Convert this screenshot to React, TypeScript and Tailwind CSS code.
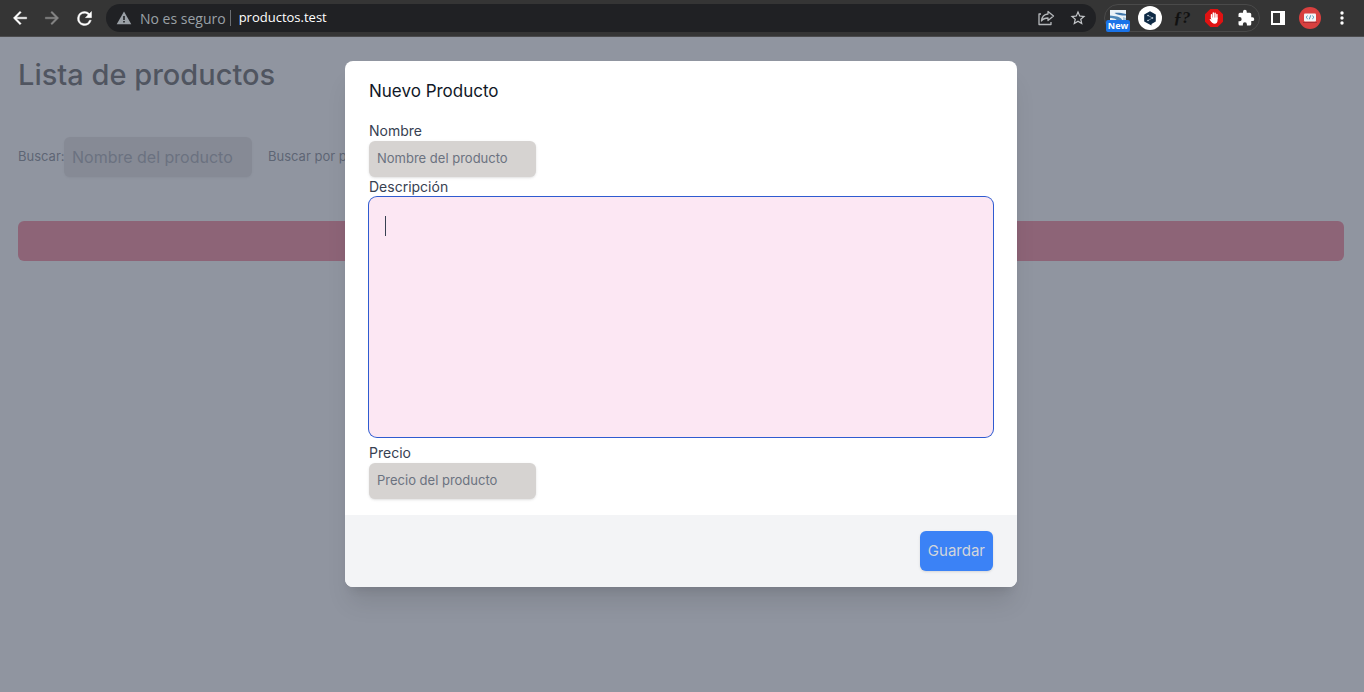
import type { ReactNode } from "react";

function BarButton({ label, children }: { label: string; children: ReactNode }) {
  return (
    <button type="button" aria-label={label} className="flex h-8 w-8 shrink-0 items-center justify-center">
      {children}
    </button>
  );
}

function BrowserBar() {
  return (
    <header className="flex h-[37px] items-center border-b border-[#4b4b4d] bg-[#353535] pr-[6px] pl-1 font-['Open_Sans',sans-serif]">
      <BarButton label="Atrás">
        <svg width="20" height="20" viewBox="0 0 24 24" fill="#fff">
          <path d="M20 11H7.830l5.590-5.590L12 4l-8 8 8 8 1.410-1.410L7.830 13H20v-2z" stroke="#fff" strokeWidth=".5" />
        </svg>
      </BarButton>
      <BarButton label="Adelante">
        <svg width="20" height="20" viewBox="0 0 24 24" fill="#868686">
          <path d="M12 4l-1.410 1.410L16.170 11H4v2h12.170l-5.580 5.590L12 20l8-8z" stroke="#868686" strokeWidth=".5" />
        </svg>
      </BarButton>
      <BarButton label="Recargar">
        <svg width="21" height="21" viewBox="0 0 24 24" fill="#fff">
          <path d="M17.650 6.350A7.960 7.960 0 0 0 12 4a8 8 0 1 0 7.730 10h-2.080A6 6 0 1 1 12 6c1.660 0 3.140.690 4.220 1.780L13 11h7V4l-2.350 2.350z" stroke="#fff" strokeWidth=".5" />
        </svg>
      </BarButton>

      <div className="ml-[6px] flex h-7 min-w-0 flex-1 items-center rounded-full bg-[#202124] pr-[2px] pl-[10px]">
        <svg className="shrink-0" width="16" height="16" viewBox="0 0 16 16">
          <path d="M8 1.500 15.300 14.300H.7z" fill="#9aa0a6" />
          <path d="M7.200 6h1.600v4H7.200zM7.200 11h1.600v1.600H7.200z" fill="#202124" />
        </svg>
        <span className="ml-2 shrink-0 text-[14px] text-[#9aa0a6]">No es seguro</span>
        <span className="mr-2 ml-1 h-4 w-px shrink-0 bg-[#6b6e72]" />
        <input
          aria-label="Dirección"
          defaultValue="productos.test"
          className="min-w-0 flex-1 bg-transparent text-[13px] text-white outline-none"
        />
        <BarButton label="Compartir">
          <svg width="18" height="18" viewBox="0 0 18 18" fill="none" stroke="#b4b7ba" strokeWidth="1.300" strokeLinejoin="round">
            <path d="M4 5H2v10.500h12V13" />
            <path d="M11 2.500 16.500 7 11 11.500V9C8 9 6 9.800 4.500 12 4.800 8 7 5.400 11 5z" />
          </svg>
        </BarButton>
        <BarButton label="Agregar a favoritos">
          <svg width="18" height="18" viewBox="0 0 24 24" fill="#c4c7ca">
            <path d="M22 9.240l-7.190-.620L12 2 9.190 8.630 2 9.240l5.460 4.730L5.820 21 12 17.270 18.180 21l-1.630-7.030L22 9.240zM12 15.400l-3.760 2.270 1-4.280-3.320-2.880 4.380-.380L12 6.100l1.710 4.040 4.380.380-3.320 2.880 1 4.280L12 15.400z" />
          </svg>
        </BarButton>
      </div>

      <div className="ml-2 flex h-7 items-center rounded-full border border-[#4a4a4a] px-px">
        <div className="-mx-1 flex">
          <button type="button" aria-label="Extensión nueva" className="relative flex h-8 w-8 items-start justify-center">
            <svg width="16" height="11" viewBox="0 0 16 11" className="mt-2">
              <path d="M0 0h16v11H0z" fill="#e9f2f8" />
              <path d="M4.500 3C7 2.500 11 2.800 16 4v1.500C11 5.500 7 5 4.500 3z" fill="#3f77ab" />
              <path d="M0 5.500C5 6 10 6.500 12 9.500L11 11H7C7 9 4 8 0 8z" fill="#4b86b8" />
              <path d="M13 7l3 1v3h-3z" fill="#a7c6dd" />
            </svg>
            <span className="absolute inset-x-1 bottom-0.5 rounded-xs bg-[#1a73e8] text-center text-[9px] leading-3 font-bold text-white">
              New
            </span>
          </button>
          <BarButton label="DeepL">
            <svg width="24" height="24" viewBox="0 0 24 24">
              <circle cx="12" cy="12" r="12" fill="#fff" />
              <path d="M12 5.200 17.800 8.500v7L13.500 18v1.500L6.200 15.500v-7z" fill="#0f2b46" />
              <path d="M10 9.500l4.500 2.500-4.500 2.500" fill="none" stroke="#8ba0b4" strokeWidth=".8" />
              <g fill="#d5dde5">
                <circle cx="10" cy="9.500" r=".8" />
                <circle cx="14.500" cy="12" r=".8" />
                <circle cx="10" cy="14.500" r=".8" />
              </g>
            </svg>
          </BarButton>
          <button
            type="button"
            aria-label="Buscador de fuentes"
            className="flex h-8 w-8 items-center justify-center font-['Liberation_Serif',serif] text-[17px] font-bold text-[#111] italic"
          >
            ƒ?
          </button>
          <BarButton label="Bloqueador">
            <svg width="18" height="18" viewBox="0 0 18 18">
              <path d="M5.300 0h7.400L18 5.300v7.400L12.700 18H5.300L0 12.700V5.300z" fill="#e01212" />
              <path d="M6.500 9V5.800M8.300 8.500V4M10.100 8.500V4.300M11.900 9.500V5.500" stroke="#fff" strokeWidth="1.400" strokeLinecap="round" />
              <path d="M5.800 8.500h6.800v2.500c0 2.300-1 3.700-2.900 3.700-2 0-3-1-5.200-4.200l.7-.6 1.300.6z" fill="#fff" />
            </svg>
          </BarButton>
          <BarButton label="Extensiones">
            <svg width="18" height="18" viewBox="0 0 24 24" fill="#fff">
              <path d="M20.500 11H19V7a2 2 0 0 0-2-2h-4V3.500a2.500 2.500 0 0 0-5 0V5H4a2 2 0 0 0-2 2v3.800h1.500a2.700 2.700 0 0 1 0 5.400H2V20a2 2 0 0 0 2 2h3.800v-1.500a2.700 2.700 0 0 1 5.400 0V22H17a2 2 0 0 0 2-2v-4h1.500a2.500 2.500 0 0 0 0-5z" />
            </svg>
          </BarButton>
        </div>
      </div>

      <div className="ml-[2px] flex">
        <BarButton label="Panel lateral">
          <svg width="14" height="14" viewBox="0 0 14 14">
            <path fillRule="evenodd" fill="#fff" d="M0 0h14v14H0zM2 2v10h7V2z" />
          </svg>
        </BarButton>
        <BarButton label="Perfil">
          <svg width="22" height="22" viewBox="0 0 22 22">
            <circle cx="11" cy="11" r="11" fill="#d8403f" />
            <rect x="5" y="6.500" width="12" height="8" rx="1" fill="#f3f5f7" />
            <path d="M4 15h14v1H4z" fill="#a92e35" />
            <path d="M8.700 8.700 7 10.300l1.700 1.600M13.300 8.700l1.700 1.600-1.700 1.600M11.700 8.300l-1.400 4" fill="none" stroke="#4796b5" />
          </svg>
        </BarButton>
        <BarButton label="Menú">
          <svg width="4" height="16" viewBox="0 0 4 16" fill="#fff">
            <circle cx="2" cy="3" r="1.700" />
            <circle cx="2" cy="8" r="1.700" />
            <circle cx="2" cy="13" r="1.700" />
          </svg>
        </BarButton>
      </div>
    </header>
  );
}

function ProductPage() {
  return (
    <main className="pr-5 pl-[18px]">
      <h1 className="pt-5 text-[29px] leading-9 font-medium text-black">Lista de productos</h1>
      <div className="mt-11 flex items-center text-[13px] text-[#374151]">
        <label htmlFor="buscar" className="w-[46px] whitespace-nowrap">Buscar:</label>
        <input
          id="buscar"
          placeholder="Nombre del producto"
          className="h-10 w-[188px] rounded-md bg-[#d6d3d1] px-2 text-[16px] shadow-sm placeholder:text-[#6b7280]"
        />
        <label htmlFor="precio-max" className="ml-4 whitespace-nowrap">Buscar por precio:</label>
        <input id="precio-max" className="h-10 w-[188px] rounded-md bg-[#d6d3d1] px-2" />
      </div>
      <div className="mt-11 h-10 rounded-md bg-[#f43f5e]" />
    </main>
  );
}

const fieldClass =
  "block h-9 w-[167px] rounded-md bg-[#d6d3d1] px-2 pb-0.5 text-[13px] text-[#374151] shadow-sm outline-none placeholder:text-[#6b7280]";

function ProductDialog() {
  return (
    <form
      role="dialog"
      aria-labelledby="titulo"
      className="w-full max-w-2xl overflow-hidden rounded-lg bg-white shadow-xl"
    >
      <div className="px-6 py-4 text-[14px] leading-5 text-[#374151]">
        <h2 id="titulo" className="mb-4 text-[17px] leading-7 text-[#111827]">Nuevo Producto</h2>
        <label htmlFor="nombre" className="block">Nombre</label>
        <input id="nombre" placeholder="Nombre del producto" className={fieldClass} />
        <label htmlFor="descripcion" className="block">Descripción</label>
        <div className="relative mb-[6px]">
          <textarea
            id="descripcion"
            className="block h-60 w-full resize-none rounded-lg bg-[#fce7f3] p-4 ring-1 ring-[#2f5bd0] outline-none"
          />
          <span className="absolute top-[19px] left-4 h-5 w-px bg-[#374151]" />
        </div>
        <label htmlFor="precio" className="block">Precio</label>
        <input id="precio" placeholder="Precio del producto" className={fieldClass} />
      </div>
      <div className="flex justify-end bg-[#f3f4f6] px-6 py-4">
        <button type="submit" className="h-10 rounded-md bg-[#3b82f6] px-2 text-[15px] text-[#d1d5db] shadow-sm">
          Guardar
        </button>
      </div>
    </form>
  );
}

export default function App() {
  return (
    <div className="flex min-h-screen flex-col font-[Inter,sans-serif]">
      <BrowserBar />
      <div className="relative flex-1 bg-white">
        <ProductPage />
        <div className="absolute inset-0 flex items-start justify-center bg-[#6b7280]/75 py-6 pr-[2px]">
          <ProductDialog />
        </div>
      </div>
    </div>
  );
}
